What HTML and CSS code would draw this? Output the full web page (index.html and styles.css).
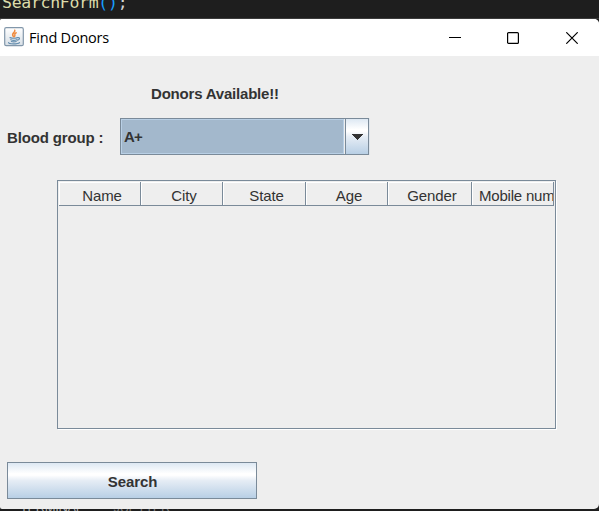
FILE: index.html
```html
<!DOCTYPE html>
<html lang="en">
<head>
<meta charset="utf-8">
<title>Find Donors</title>
<link rel="stylesheet" href="styles.css">
</head>
<body>
<div class="editor"><span class="fn">SearchForm</span><span class="paren">()</span>;</div>
<main class="window">
  <header class="titlebar">
    <svg class="java" width="20" height="20" viewBox="0 0 20 20">
      <defs><linearGradient id="tile" x1="0" y1="0" x2="0" y2="1"><stop offset="0" stop-color="#fff"/><stop offset="1" stop-color="#d7dfe6"/></linearGradient></defs>
      <rect x=".7" y=".7" width="18.6" height="18" rx="1.5" fill="url(#tile)" stroke="#8297aa" stroke-width="1.2"/>
      <g fill="none" stroke-linecap="round">
        <path d="M10.8 3.2C11.6 5.6 6.6 6.2 9.4 9.6M12.2 5.8C9 7.2 12.2 8 10.3 9.8" stroke="#ef8b3e" stroke-width="1.5"/>
        <path d="M6 10.6q4 1.3 7.5 0M6.8 12.7q3 1.2 6 0M7.4 14.5q2.5.8 4.8 0M13.6 10.7c2.7-.8 2.4 2.1-.1 2.5M4.5 15.6c0 1.7 9.5 1.7 11 0" stroke="#658eaf" stroke-width="1.2"/>
      </g>
    </svg>
    <h1 class="title">Find Donors</h1>
    <div class="controls">
      <svg width="12" height="12" viewBox="0 0 12 12"><path d="M0 5.5h12"/></svg>
      <svg width="12" height="12" viewBox="0 0 12 12"><rect x=".6" y=".6" width="10.8" height="10.8" rx="1"/></svg>
      <svg width="12" height="12" viewBox="0 0 12 12"><path d="M.3.3l11.4 11.4M11.7.3L.3 11.7"/></svg>
    </div>
  </header>
  <section class="content">
    <h2 class="heading">Donors Available!!</h2>
    <div class="field">
      <span class="label">Blood group :</span>
      <div class="combo">
        <span class="value">A+</span>
        <span class="drop"><svg width="12" height="6" viewBox="0 0 12 6" shape-rendering="crispEdges"><path d="M0 0h12L6 6z" fill="#333"/></svg></span>
      </div>
    </div>
    <div class="table">
      <div class="columns">
        <span class="cell first">Name</span><span class="cell">City</span><span class="cell">State</span><span class="cell">Age</span><span class="cell">Gender</span><span class="cell clipped">Mobile num</span>
      </div>
    </div>
    <button class="search">Search</button>
  </section>
</main>
<footer class="panel"><span>TERMINAL</span><span class="dim">JUPYTER</span></footer>
</body>
</html>
```
FILE: styles.css
```css
* { box-sizing: border-box; }
body {
  margin: 0;
  width: 599px;
  height: 511px;
  overflow: hidden;
  background: #1e1e1e;
  color: #333;
  font-family: "Liberation Sans", sans-serif;
  font-size: 15px;
}
.editor {
  display: flex;
  align-items: flex-end;
  height: 19px;
  padding-left: 2px;
  overflow: hidden;
  border-bottom: 1px solid #3c3c3c;
  color: #d4d4d4;
  font: 16.5px/31px "DejaVu Sans Mono", monospace;
  letter-spacing: -.3px;
}
.fn { color: #dcdcaa; }
.paren { color: #179fff; }
.window {
  height: 490px;
  overflow: hidden;
  background: #eee;
  border-radius: 2px 5px 5px 2px;
}
.titlebar {
  display: flex;
  align-items: center;
  height: 37px;
  padding: 0 21px 0 4px;
  background: #fff;
}
.java { margin-top: -1px; }
.title {
  margin: 0 0 0 5px;
  color: #000;
  font: 14.5px/20px "Open Sans", sans-serif;
  letter-spacing: -.22px;
}
.controls {
  display: flex;
  gap: 47px;
  margin-left: auto;
}
.controls svg {
  fill: none;
  stroke: #000;
  stroke-width: 1.2;
}
.controls svg:nth-child(1) { margin-right: -1px; }
.content { padding: 29px 0 0 7px; }
.heading {
  margin: 0 0 0 144px;
  font-size: 15px;
  line-height: 18px;
  letter-spacing: -.2px;
}
.field {
  display: flex;
  align-items: center;
  height: 37px;
  margin-top: 15px;
  font-weight: bold;
  letter-spacing: -.15px;
}
.label { width: 113px; padding-top: 2px; }
.combo {
  display: flex;
  width: 249px;
  height: 37px;
  border: 1px solid #7a8a99;
  box-shadow: 1px 0 #dfe6ed;
}
.value {
  flex: 1;
  border: 1px solid #b8cfe5;
  background: #a3b8cc;
  padding-left: 2px;
  line-height: 34px;
  letter-spacing: -.8px;
}
.drop {
  display: flex;
  align-items: center;
  justify-content: center;
  width: 23px;
  border-left: 1px solid #7a8a99;
  margin-left: 1px;
}
.drop, .search {
  background: linear-gradient(#dde8f3 0, #fff 30%, #fff 35%, #e6edf5 50%, #b8cfe5 100%);
}
.table {
  width: 499px;
  height: 249px;
  margin: 25px 0 0 50px;
  border: 1px solid #7a8a99;
  box-shadow: 1px 1px #fff;
}
.columns {
  display: grid;
  grid-template-columns: 82px 82px 83px 82px 84px 82px;
  height: 25px;
  padding: 1px 0 0 1px;
}
.cell {
  height: 24px;
  padding-left: 5px;
  overflow: hidden;
  border: solid #7a8a99;
  border-width: 0 1px 1px 0;
  box-shadow: inset 1px 1px #fff;
  line-height: 27px;
  letter-spacing: -.1px;
  text-align: center;
  white-space: nowrap;
}
.clipped { padding-left: 7px; text-align: left; letter-spacing: -.2px; }
.search {
  display: block;
  width: 250px;
  height: 37px;
  margin-top: 33px;
  padding: 1px 0 0 1px;
  border: 1px solid #7a8a99;
  color: #333;
  font: bold 15px "Liberation Sans", sans-serif;
  letter-spacing: -.1px;
}
.panel {
  display: flex;
  gap: 31px;
  height: 2px;
  padding-left: 20px;
  overflow: hidden;
  color: #aaa;
  font-size: 13px;
  line-height: 0;
  align-items: flex-end;
  letter-spacing: -.4px;
}
.panel span { margin-bottom: 3px; }
.dim { color: #777; }
```
